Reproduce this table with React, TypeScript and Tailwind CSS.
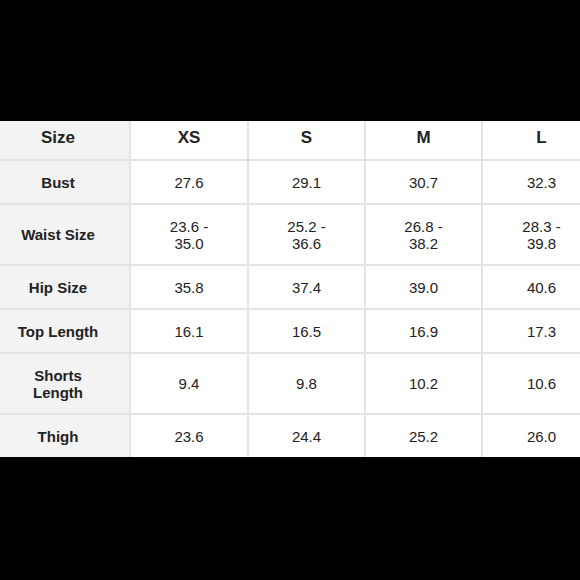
import React from "react";

const sizes = ["XS", "S", "M", "L"];

const rows: { label: string[]; values: string[][] }[] = [
    { label: ["Bust"], values: [["27.6"], ["29.1"], ["30.7"], ["32.3"]] },
    {
        label: ["Waist Size"],
        values: [
            ["23.6 -", "35.0"],
            ["25.2 -", "36.6"],
            ["26.8 -", "38.2"],
            ["28.3 -", "39.8"],
        ],
    },
    { label: ["Hip Size"], values: [["35.8"], ["37.4"], ["39.0"], ["40.6"]] },
    { label: ["Top Length"], values: [["16.1"], ["16.5"], ["16.9"], ["17.3"]] },
    {
        label: ["Shorts", "Length"],
        values: [["9.4"], ["9.8"], ["10.2"], ["10.6"]],
    },
    { label: ["Thigh"], values: [["23.6"], ["24.4"], ["25.2"], ["26.0"]] },
];

const Lines = ({ lines }: { lines: string[] }) => (
    <>
        {lines.map((l) => (
            <span key={l} className="block">
                {l}
            </span>
        ))}
    </>
);

export default function App() {
    return (
        <div
            className="w-[580px] h-[580px] bg-black overflow-hidden pt-[121px] text-[#222]"
            style={{ fontFamily: '"Liberation Sans", Arial, sans-serif' }}
        >
            {/* table is wider than the frame and cropped on both sides */}
            <div className="w-[613px] -ml-[13px] grid grid-cols-[142px_116px_115px_115px_117px] grid-rows-[38px_42px_59px_42px_42px_59px_42px] gap-[2px] bg-[#e4e4e4]">
                <div className="bg-[#f3f3f3] flex items-center justify-center pb-[4px] font-bold text-[17px]">
                    Size
                </div>
                {sizes.map((s) => (
                    <div
                        key={s}
                        className="bg-white flex items-center justify-center pb-[4px] font-bold text-[17px]"
                    >
                        {s}
                    </div>
                ))}

                {rows.map((row) => (
                    <React.Fragment key={row.label.join(" ")}>
                        <div className="bg-[#f3f3f3] flex flex-col items-center justify-center text-center font-bold text-[15px] leading-[17px]">
                            <Lines lines={row.label} />
                        </div>
                        {row.values.map((v, i) => (
                            <div
                                key={i}
                                className="bg-white flex flex-col items-center justify-center text-center text-[15px] leading-[17px]"
                            >
                                <Lines lines={v} />
                            </div>
                        ))}
                    </React.Fragment>
                ))}
            </div>
        </div>
    );
}
